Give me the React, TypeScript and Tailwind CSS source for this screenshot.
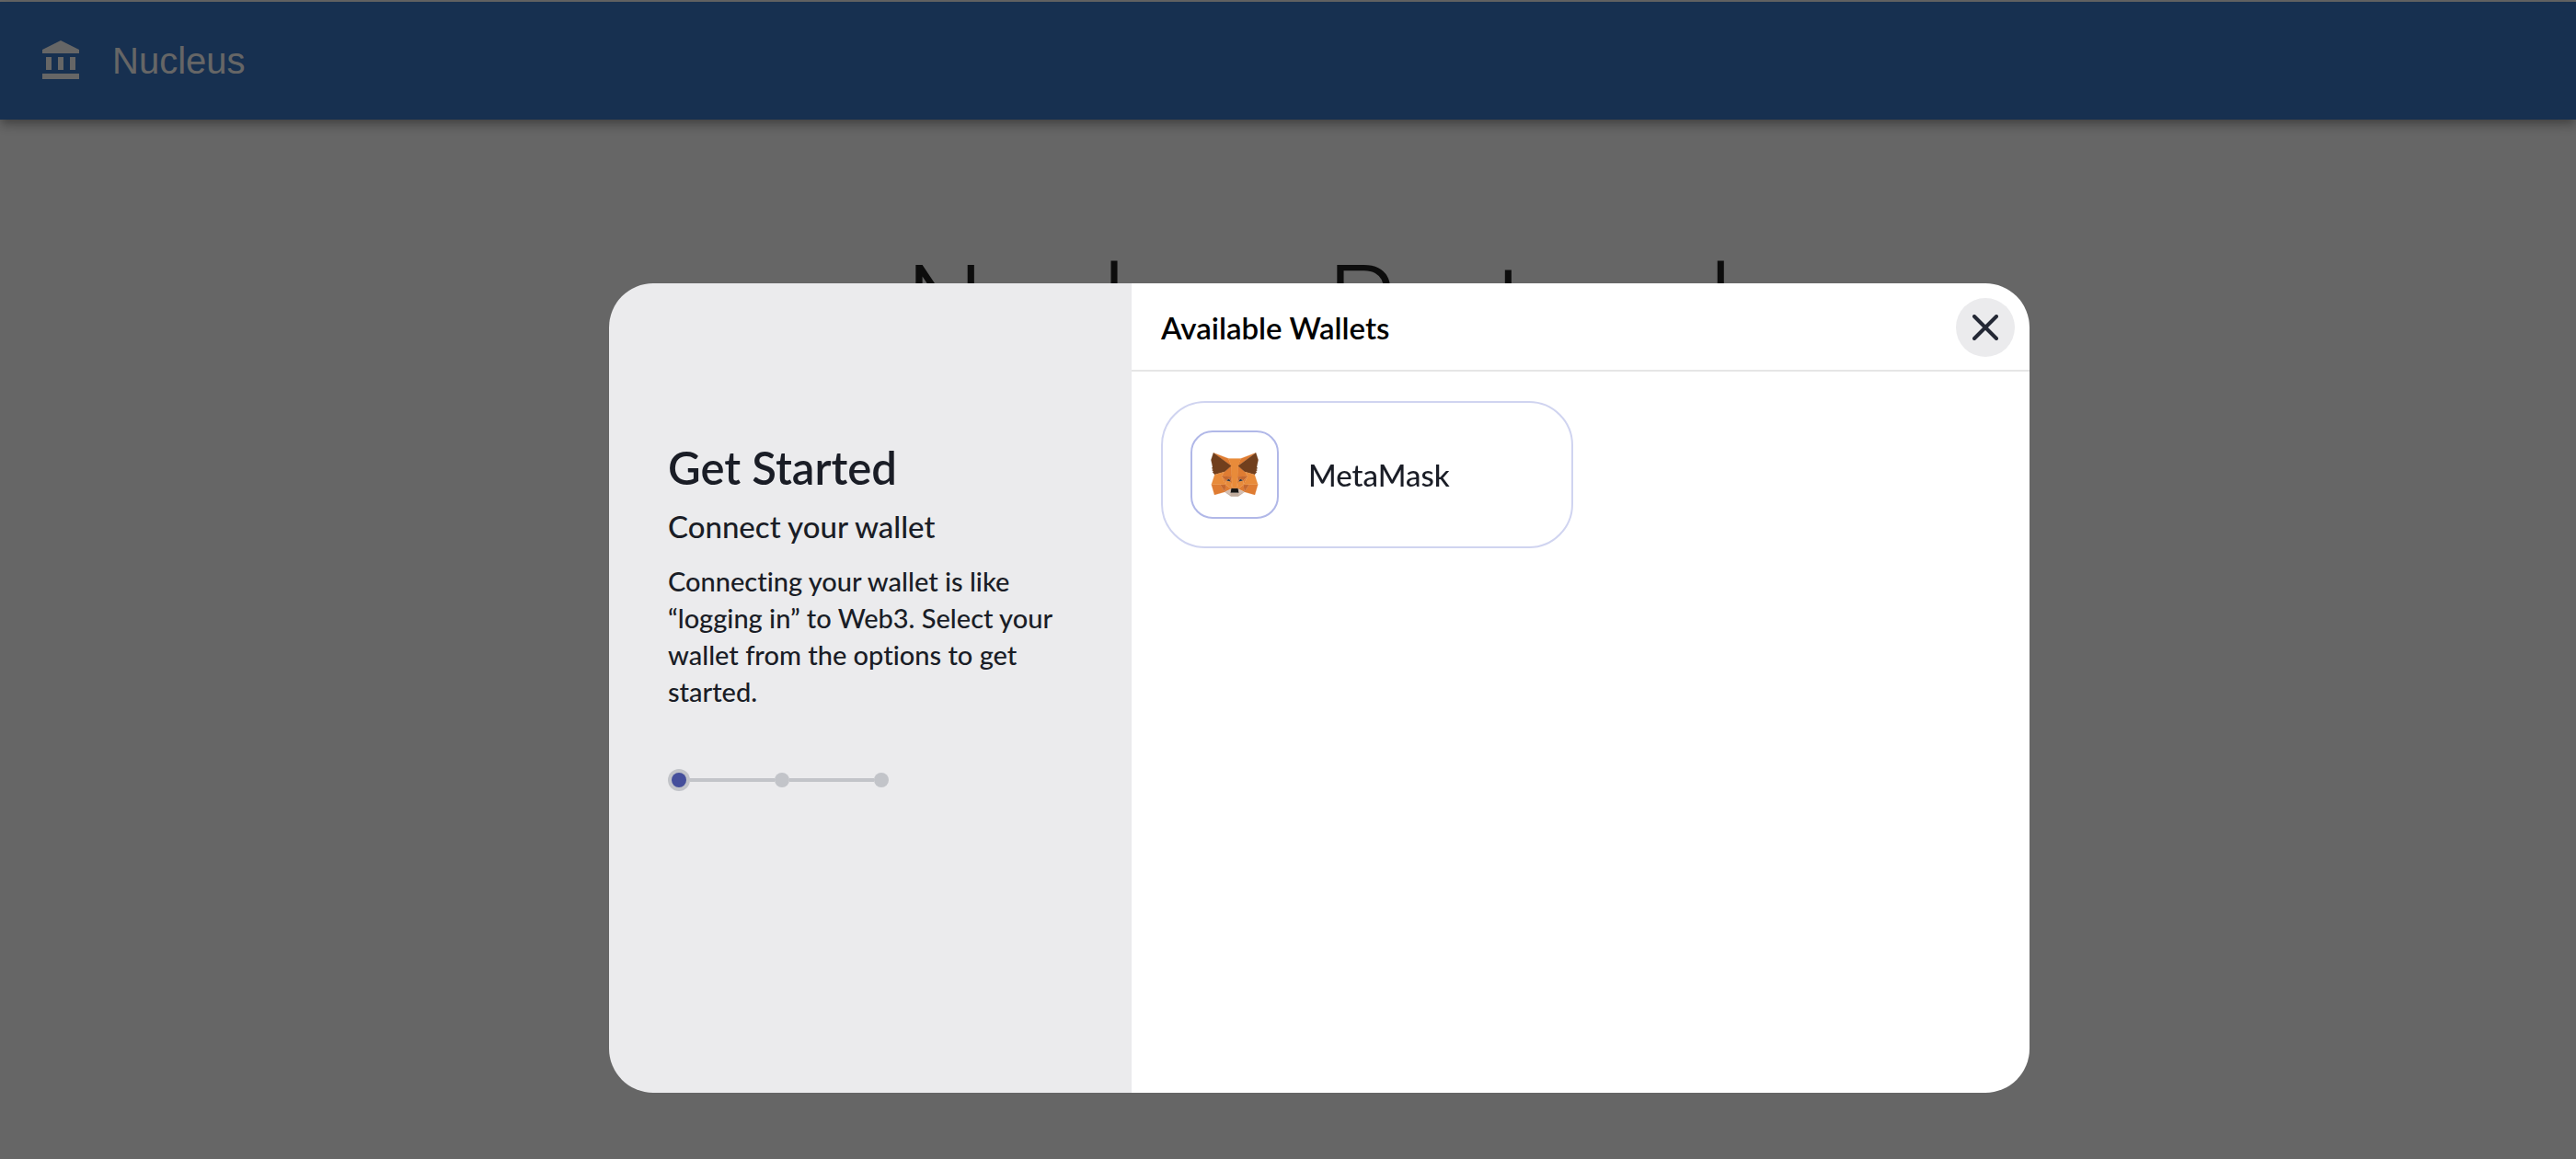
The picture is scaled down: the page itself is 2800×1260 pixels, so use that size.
import React from "react";

const uiFont = "font-['Lato','Open_Sans',sans-serif] [font-variant-ligatures:none]";

function BankIcon() {
  return (
    <svg viewBox="0 0 24 24" className="size-12 shrink-0 fill-white" aria-hidden="true">
      <path d="M4 10h3v7H4zm6.5 0h3v7h-3zM2 19h20v3H2zm15-9h3v7h-3zm-5-9L2 6v2h20V6z" />
    </svg>
  );
}

const foxShapes: [string, string][] = [
  ["#df7c32", "m32.9582 1-13.1341 9.7183 2.4424-5.72731z"],
  ["#df7c32", "m2.66296 1 13.01714 9.809-2.3254-5.81802z"],
  ["#df7c32", "m28.2295 23.5335-3.4947 5.3386 7.4829 2.0603 2.1436-7.2823z"],
  ["#df7c32", "m1.27281 23.6501 2.13055 7.2823 7.46994-2.0603-3.48166-5.3386z"],
  ["#df7c32", "m10.4706 14.5149-2.0786 3.1358 7.405.3369-.2469-7.969z"],
  ["#df7c32", "m25.1505 14.5149-5.1575-4.58704-.1688 8.05974 7.4049-.3369z"],
  ["#df7c32", "m10.8733 28.8721 4.4819-2.1639-3.8583-3.0062z"],
  ["#df7c32", "m20.2659 26.7082 4.4689 2.1639-.6105-5.1701z"],
  ["#d5bfb2", "m24.7348 28.8721-4.469-2.1639.3638 2.9025-.039 1.231z"],
  ["#d5bfb2", "m10.8732 28.8721 4.1572 1.9696-.026-1.231.3508-2.9025z"],
  ["#233447", "m15.1084 21.7842-3.7155-1.0884 2.6243-1.2051z"],
  ["#233447", "m20.5126 21.7842 1.0913-2.2935 2.6372 1.2051z"],
  ["#c4682f", "m10.8733 28.8721.6495-5.3386-4.1312.1167z"],
  ["#c4682f", "m24.0982 23.5335.6366 5.3386 3.4946-5.2219z"],
  ["#c4682f", "m27.2291 17.6507-7.405.3369.6885 3.7966 1.0913-2.2935 2.6372 1.2051z"],
  ["#c4682f", "m11.3929 20.6958 2.6242-1.2051 1.0913 2.2935.6885-3.7966-7.40495-.3369z"],
  ["#df7c32", "m8.392 17.6507 3.1049 6.0513-.1039-3.0062z"],
  ["#df7c32", "m24.2412 20.6958-.1169 3.0062 3.1049-6.0513z"],
  ["#df7c32", "m15.797 17.9876-.6886 3.7967.8704 4.4833.1949-5.9087z"],
  ["#df7c32", "m19.8242 17.9876-.3638 2.3584.1819 5.9216.8704-4.4833z"],
  ["#e88b3a", "m20.5127 21.7842-.8704 4.4834.6236.4406 3.8584-3.0062.1169-3.0062z"],
  ["#e88b3a", "m11.3929 20.6958.104 3.0062 3.8583 3.0062.6236-.4406-.8704-4.4834z"],
  ["#c0ac9d", "m20.5906 30.8417.039-1.231-.3378-.2851h-4.9626l-.3248.2851.026 1.231-4.1572-1.9696 1.4551 1.1921 2.9489 2.0344h5.0536l2.962-2.0344 1.442-1.1921z"],
  ["#161616", "m20.2659 26.7082-.6236-.4406h-3.6635l-.6236.4406-.3508 2.9025.3248-.2851h4.9626l.3378.2851z"],
  ["#713f1d", "m33.5168 11.3532 1.1043-5.36447-1.6629-4.98873-12.6923 9.3944 4.8846 4.1205 6.8983 2.0085 1.52-1.7752-.6626-.4795 1.0523-.9588-.8054-.622 1.0523-.8034z"],
  ["#713f1d", "m1 5.98873 1.11724 5.36447-.71451.5313 1.06527.8034-.80545.622 1.05228.9588-.66255.4795 1.51997 1.7752 6.89835-2.0085 4.8846-4.1205-12.69233-9.3944z"],
  ["#e88b3a", "m32.0489 16.5234-6.8983-2.0085 2.0786 3.1358-3.1049 6.0513 4.1052-.0519h6.1318z"],
  ["#e88b3a", "m10.4705 14.5149-6.89828 2.0085-2.29944 7.1267h6.11883l4.1052.0519-3.1049-6.0513z"],
  ["#e88b3a", "m19.8241 17.9876.4417-7.5932 2.0007-5.4034h-8.9119l2.0006 5.4034.4417 7.5932.1689 2.3842.013 5.8958h3.6635l.013-5.8958z"],
];

function FoxLogo() {
  return (
    <svg viewBox="0.8 0.8 34 31.5" className="h-12 w-[52px]" aria-hidden="true">
      {foxShapes.map(([fill, d]) => (
        <path key={d} d={d} fill={fill} stroke={fill} strokeWidth="0.15" strokeLinejoin="round" />
      ))}
    </svg>
  );
}

function Stepper() {
  return (
    <div className="flex items-center" role="img" aria-label="Step 1 of 3">
      <span className="flex size-6 items-center justify-center rounded-full bg-[#c2c4c9]">
        <span className="size-4 rounded-full bg-[#454f9b]" />
      </span>
      <span className="h-1 w-[92px] bg-[#c2c4c9]" />
      <span className="size-4 rounded-full bg-[#c2c4c9]" />
      <span className="h-1 w-[92px] bg-[#c2c4c9]" />
      <span className="size-4 rounded-full bg-[#c2c4c9]" />
    </div>
  );
}

function IntroPanel() {
  return (
    <aside className="w-[568px] shrink-0 bg-[#ebebed] px-16 pt-[168px] text-[#1a1d26]">
      <h2 className="mb-2 text-[49px] leading-[64px] font-semibold">Get Started</h2>
      <h3 className="text-[33px] leading-[48px] font-medium">Connect your wallet</h3>
      <p className="mt-4 mb-16 text-[29px] leading-[40px] font-medium">
        Connecting your wallet is like “logging in” to Web3. Select your wallet from the options to
        get started.
      </p>
      <Stepper />
    </aside>
  );
}

function WalletPanel() {
  return (
    <section className="flex min-w-0 flex-1 flex-col bg-white">
      <header className="flex h-24 items-center justify-between border-b-2 border-[#e6e6e6] pt-0.5 pr-4 pl-8">
        <h2 className="text-[33px] leading-[40px] font-semibold text-black">Available Wallets</h2>
        <button
          type="button"
          aria-label="Close"
          className="flex size-16 items-center justify-center rounded-full bg-[#ebebed]"
        >
          <svg viewBox="0 0 28 28" className="size-7" aria-hidden="true">
            <path d="M2 2l24 24M26 2L2 26" fill="none" stroke="#242835" strokeWidth="4" strokeLinecap="round" />
          </svg>
        </button>
      </header>
      <div className="p-8">
        <button
          type="button"
          className="flex w-[448px] items-center gap-8 rounded-[48px] border-2 border-[#d0d4f0] p-[30px] text-left"
        >
          <span className="flex size-24 items-center justify-center rounded-3xl border-2 border-[#b1b8e8]">
            <FoxLogo />
          </span>
          <span className="text-[33px] leading-[40px] font-medium text-[#1a1d26]">MetaMask</span>
        </button>
      </div>
    </section>
  );
}

export default function App() {
  return (
    <div className="relative min-h-screen overflow-hidden bg-white pt-0.5">
      <header className="flex h-32 items-center gap-8 bg-[#3a78c8] px-[42px] shadow-[0_4px_8px_-2px_rgba(0,0,0,0.2),0_8px_10px_rgba(0,0,0,0.14),0_2px_20px_rgba(0,0,0,0.12)]">
        <BankIcon />
        <span className="font-['Liberation_Sans',sans-serif] text-[40px] leading-[64px] text-white">
          Nucleus
        </span>
      </header>
      <main className="pt-[131px] pl-[68px] text-center">
        <h1 className="font-['Roboto',sans-serif] text-[120px] leading-[144px] font-light text-[#212121]">
          Nucleus Protocol
        </h1>
      </main>

      <div className="fixed inset-0 flex items-start justify-center bg-black/60 pt-[308px] pl-[68px]">
        <div
          role="dialog"
          aria-modal="true"
          aria-label="Connect your wallet"
          className={`flex min-h-[880px] w-full max-w-[1544px] overflow-hidden rounded-[48px] ${uiFont}`}
        >
          <IntroPanel />
          <WalletPanel />
        </div>
      </div>
    </div>
  );
}
